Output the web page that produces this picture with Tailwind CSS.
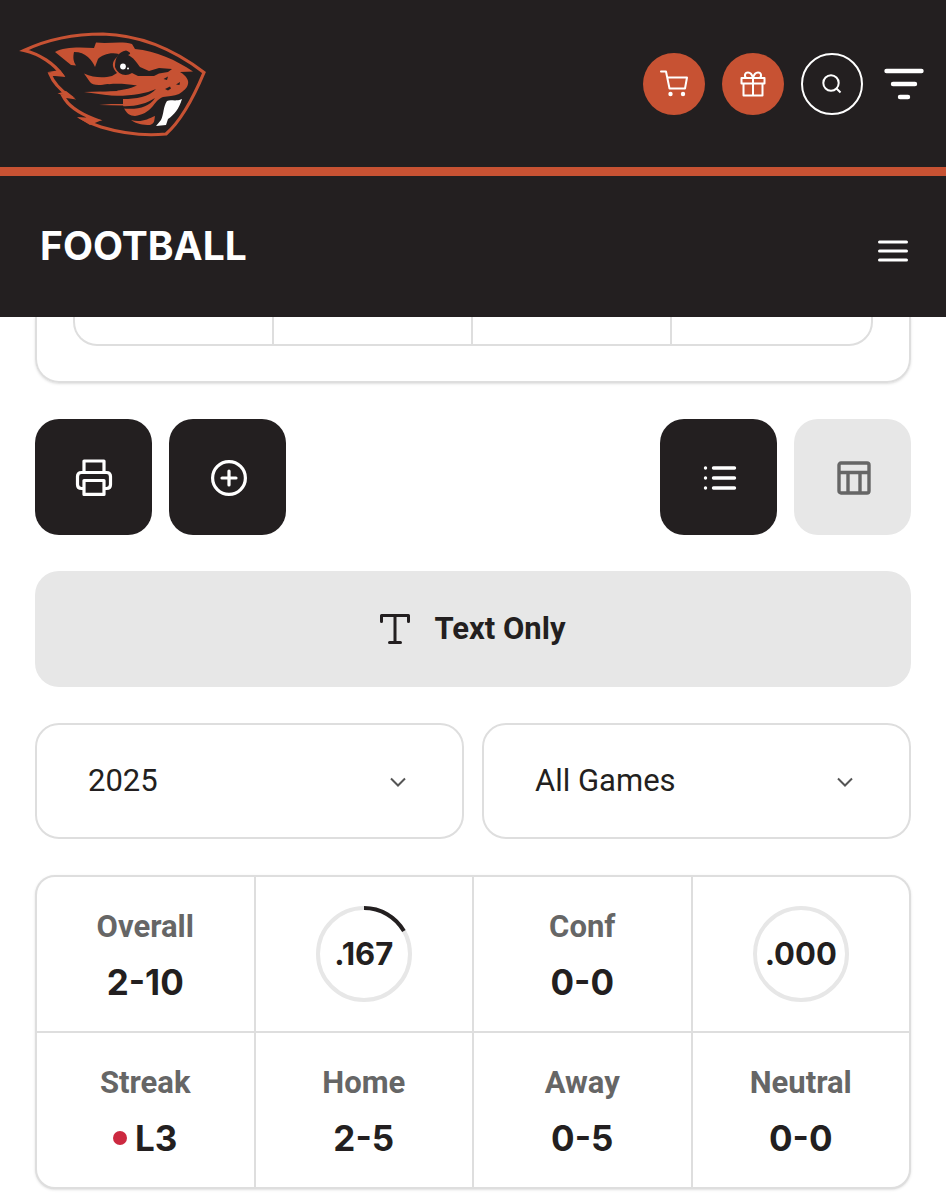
<!DOCTYPE html>
<html lang="en">

<head>
    <meta charset="utf-8">
    <meta name="viewport" content="width=device-width, initial-scale=1">
    <script src="https://cdn.jsdelivr.net/npm/@tailwindcss/browser@4"></script>
    <title>Football Schedule</title>
</head>

<body class="bg-white font-[Roboto,sans-serif] text-[#231f20]">
    <header class="bg-[#231f20] text-white">
        <div class="flex items-center justify-between h-44 border-b-9 border-[#c75233] pl-[18px] pr-[22px]">
            <a href="#" aria-label="Home">
                <svg class="w-[190px] h-[110px]" viewBox="18 28 190 110" fill="none">
                    <!-- outline -->
                    <path d="M24 49.500C50 37 78 33 103 33C142 34 176 50 204 71.500C195 93 182 119 166 133C146 135 121 132 101 126C94 124 88 121 83 118L94 118C76 111 67 103 63 95L70 96C59 88 53 81 50 73L62 74C54 63 40 53 24 49.500Z" stroke="#c75233" stroke-width="3.200" stroke-miterlimit="8" />
                    <path d="M48 71L65 75.500L60 69ZM57.500 92.500L75 97L66 90ZM77 116L102 119L90 124Z" fill="#c75233" />
                    <!-- head -->
                    <path d="M55 51C64 46 78 46 94 47L96 41.500C108 43 122 40 132 43L135 48C156 50 176 59 193 70.500L180 71C187 75 189 80 188 83C187 88 183 90 179 93C174 95 168 95 163 96C158 98 156 101 153 105C148 111 142 114 135 115C130 115 126 112 124 107L123 104.500L99 104L123 102L123 97L106 94L84 91L118 90L108 83C98 85 92 84 90 81L84 72.500C94 77 104 77 112 75L117 72C112 67 111 61 117 56L119 53C110 51 102 54 98 58L95 66C92 59 86 51 74 51C73 56 73 60 76 64.500L71 64Z" fill="#c75233" />
                    <path d="M131 119C141 122 148 118 155 115C154 120 155 122 150 124C143 124 136 123 131 119Z" fill="#c75233" />
                    <!-- eye, brow and stripes -->
                    <path d="M115 66C115 57 118 51 126 49.500C130 51 132 53 128 54C133 56 137 62 140 66L149 70L159 67L172 68L168 71L159 72.500L154 75L138 75L132 72C126 76 118 74 115 66Z" fill="#231f20" />
                    <path d="M100 84.500C112 82 122 82 137 84.500C130 88 115 91 100 90ZM100 94C124 96 143 94 156 88C149 96 136 98 123 98L123 103L100 103ZM120 105C134 106 146 103 155 97C149 106 138 109 123 107.500Z" fill="#231f20" />
                    <path d="M163.500 78L168 75.500L167 79ZM176 83.500L180 81L179.500 84ZM165 88L170 85.500L171 87.500L168 89.500Z" fill="#231f20" />
                    <circle cx="123" cy="65.500" r="2.900" fill="#fff" />
                    <circle cx="128" cy="67.500" r="1" fill="#fff" />
                    <!-- tooth -->
                    <path d="M167 100C171 98 175 101 182 98C179 108 174 114 168 118L166 124L156 125L161 119C164 113 163 106 167 100Z" fill="#fff" />
                </svg>
            </a>
            <nav class="flex items-center gap-[17px]" aria-label="Site">
                <a href="#" aria-label="Shop" class="rounded-full bg-[#c75233]">
                    <svg class="size-[62px]" viewBox="0 0 62 62" fill="none" stroke="#fff" stroke-width="2" stroke-linejoin="round" stroke-linecap="round">
                        <path d="M18 18.500H23L26.500 35.500H42L44 24.500H24.500" />
                        <circle cx="27.500" cy="41" r="2.200" fill="#fff" stroke="none" />
                        <circle cx="40" cy="41" r="2.200" fill="#fff" stroke="none" />
                    </svg>
                </a>
                <a href="#" aria-label="Give" class="rounded-full bg-[#c75233]">
                    <svg class="size-[62px]" viewBox="0 0 62 62" fill="none" stroke="#fff" stroke-width="2" stroke-linejoin="round">
                        <path d="M19.500 25H42.500V30.500H19.500ZM21.500 30.500H40.500V42.500H21.500ZM31 25V42.500" />
                        <path d="M31 25C30 21 28 19.500 26 19.500C22.500 19.500 22 23.500 24.500 25M31 25C32 21 34 19.500 36 19.500C39.500 19.500 40 23.500 37.500 25" />
                    </svg>
                </a>
                <button type="button" aria-label="Search" class="rounded-full">
                    <svg class="size-[62px]" viewBox="0 0 62 62" fill="none" stroke="#fff" stroke-width="2">
                        <circle cx="31" cy="31" r="30" />
                        <circle cx="30" cy="30" r="7.700" />
                        <path d="M35.500 35.500L39.500 39.500" />
                    </svg>
                </button>
                <button type="button" aria-label="Menu" class="ml-1">
                    <svg class="w-10 h-8" viewBox="0 0 40 32" stroke="#fff" stroke-width="4.400" stroke-linecap="round">
                        <path d="M2.500 3H37.500M9 16H31M16 29H24" />
                    </svg>
                </button>
            </nav>
        </div>
        <div class="flex items-center justify-between h-[141px] pl-10 pr-[37px]">
            <h1 class="font-[Inter,sans-serif] font-bold text-[39px] leading-12 pb-[2px]">FOOTBALL</h1>
            <button type="button" aria-label="Football menu" class="mt-2">
                <svg class="w-8 h-6" viewBox="0 0 32 24" stroke="#fff" stroke-width="3" stroke-linecap="round">
                    <path d="M2.500 3H29.500M2.500 12H29.500M2.500 21H29.500" />
                </svg>
            </button>
        </div>
    </header>

    <main class="px-[35px] pb-2">
        <!-- end of the previous card -->
        <div class="border-2 border-t-0 border-[#dedede] rounded-b-3xl shadow-sm px-9 pb-[35px]">
            <div class="grid grid-cols-4 h-[29px] border-2 border-t-0 border-[#dedede] rounded-b-3xl divide-x-2 divide-[#dedede]">
                <div></div>
                <div></div>
                <div></div>
                <div></div>
            </div>
        </div>

        <div class="flex gap-[17px] mt-9">
            <button type="button" aria-label="Print" class="flex items-center justify-center w-[117px] h-[116px] rounded-3xl bg-[#231f20]">
                <svg class="size-[38px]" viewBox="-1 -1 38 38" fill="none" stroke="#fff" stroke-width="3.200" stroke-linejoin="round">
                    <path d="M8 13V2H28V13M8 29.500H5.500Q1.500 29.500 1.500 25.500V17.500Q1.500 13.500 5.500 13.500H30.500Q34.500 13.500 34.500 17.500V25.500Q34.500 29.500 30.500 29.500H28M8 21.500H28V35.400H8Z" />
                </svg>
            </button>
            <button type="button" aria-label="Add to calendar" class="flex items-center justify-center w-[117px] h-[116px] rounded-3xl bg-[#231f20]">
                <svg class="size-[38px]" viewBox="0 0 38 38" fill="none" stroke="#fff" stroke-width="3.200" stroke-linecap="round">
                    <circle cx="20" cy="20" r="16.400" />
                    <path d="M13 20H27M20 13V27" />
                </svg>
            </button>
            <button type="button" aria-label="List view" class="flex items-center justify-center w-[117px] h-[116px] rounded-3xl bg-[#231f20] ml-auto">
                <svg class="size-[36px]" viewBox="0 0 36 36" fill="none" stroke="#fff" stroke-width="3.400" stroke-linecap="round">
                    <path d="M4.500 9H4.510M4.500 19H4.510M4.500 29H4.510M12.500 9H33.500M12.500 19H33.500M12.500 29H33.500" />
                </svg>
            </button>
            <button type="button" aria-label="Table view" class="flex items-center justify-center w-[117px] h-[116px] rounded-3xl bg-[#e7e7e7]">
                <svg class="size-[36px]" viewBox="0 0 36 36" fill="none" stroke="#666" stroke-width="3.400">
                    <rect x="4" y="4" width="30" height="30" rx="2" />
                    <path d="M4 13.500H34M13 13V34M25 13V34" />
                </svg>
            </button>
        </div>

        <button type="button" class="flex items-center justify-center gap-6 w-full h-[116px] mt-9 rounded-3xl bg-[#e7e7e7] font-bold text-[31px]">
            <svg class="size-[30px]" viewBox="0 0 30 30" fill="none" stroke="#231f20" stroke-width="3" stroke-linecap="round" stroke-linejoin="round">
                <path d="M1.500 7.500V1.500H28.500V7.500M15 1.500V28.500M9.500 28.500H20.500" />
            </svg>
            Text Only
        </button>

        <form class="grid grid-cols-2 gap-[18px] mt-9">
            <div class="relative">
                <select name="season" aria-label="Season" class="appearance-none w-full h-[116px] border-2 border-[#dedede] rounded-3xl pl-[51px] text-[31px]">
                    <option>2025</option>
                </select>
                <svg class="absolute right-[58px] top-[54px] w-4 h-[10px] pointer-events-none" viewBox="0 0 16 10" fill="none" stroke="#555" stroke-width="2">
                    <path d="M1 1.500L8 8.500L15 1.500" />
                </svg>
            </div>
            <div class="relative">
                <select name="games" aria-label="Games" class="appearance-none w-full h-[116px] border-2 border-[#dedede] rounded-3xl pl-[51px] text-[31px]">
                    <option>All Games</option>
                </select>
                <svg class="absolute right-[58px] top-[54px] w-4 h-[10px] pointer-events-none" viewBox="0 0 16 10" fill="none" stroke="#555" stroke-width="2">
                    <path d="M1 1.500L8 8.500L15 1.500" />
                </svg>
            </div>
        </form>

        <!-- record -->
        <section class="grid grid-cols-4 auto-rows-[154px] gap-[2px] mt-9 border-2 border-[#dedede] rounded-[20px] bg-[#dedede] shadow-sm overflow-hidden text-center">
            <div class="bg-white pt-[30px]">
                <h2 class="font-bold text-[31px] leading-10 text-[#666]">Overall</h2>
                <p class="font-[Inter,sans-serif] font-bold text-[35px] leading-12 mt-[11px]">2-10</p>
            </div>
            <div class="bg-white grid place-items-center">
                <svg class="col-start-1 row-start-1 size-[98px] -rotate-90" viewBox="0 0 98 98" fill="none" stroke-width="4">
                    <circle cx="49" cy="49" r="46" stroke="#e7e7e7" />
                    <circle cx="49" cy="49" r="46" stroke="#231f20" pathLength="1000" stroke-dasharray="167 1000" />
                </svg>
                <span class="col-start-1 row-start-1 font-[Inter,sans-serif] font-bold text-[31px]">.167</span>
            </div>
            <div class="bg-white pt-[30px]">
                <h2 class="font-bold text-[31px] leading-10 text-[#666]">Conf</h2>
                <p class="font-[Inter,sans-serif] font-bold text-[35px] leading-12 mt-[11px]">0-0</p>
            </div>
            <div class="bg-white grid place-items-center">
                <svg class="col-start-1 row-start-1 size-[98px]" viewBox="0 0 98 98" fill="none" stroke-width="4">
                    <circle cx="49" cy="49" r="46" stroke="#e7e7e7" />
                </svg>
                <span class="col-start-1 row-start-1 font-[Inter,sans-serif] font-bold text-[31px]">.000</span>
            </div>
            <div class="bg-white pt-[30px]">
                <h2 class="font-bold text-[31px] leading-10 text-[#666]">Streak</h2>
                <p class="flex items-center justify-center gap-2 font-[Inter,sans-serif] font-bold text-[35px] leading-12 mt-[11px]">
                    <span class="size-[14px] rounded-full bg-[#cc2940]"></span>
                    L3
                </p>
            </div>
            <div class="bg-white pt-[30px]">
                <h2 class="font-bold text-[31px] leading-10 text-[#666]">Home</h2>
                <p class="font-[Inter,sans-serif] font-bold text-[35px] leading-12 mt-[11px]">2-5</p>
            </div>
            <div class="bg-white pt-[30px]">
                <h2 class="font-bold text-[31px] leading-10 text-[#666]">Away</h2>
                <p class="font-[Inter,sans-serif] font-bold text-[35px] leading-12 mt-[11px]">0-5</p>
            </div>
            <div class="bg-white pt-[30px]">
                <h2 class="font-bold text-[31px] leading-10 text-[#666]">Neutral</h2>
                <p class="font-[Inter,sans-serif] font-bold text-[35px] leading-12 mt-[11px]">0-0</p>
            </div>
        </section>
    </main>
</body>

</html>
